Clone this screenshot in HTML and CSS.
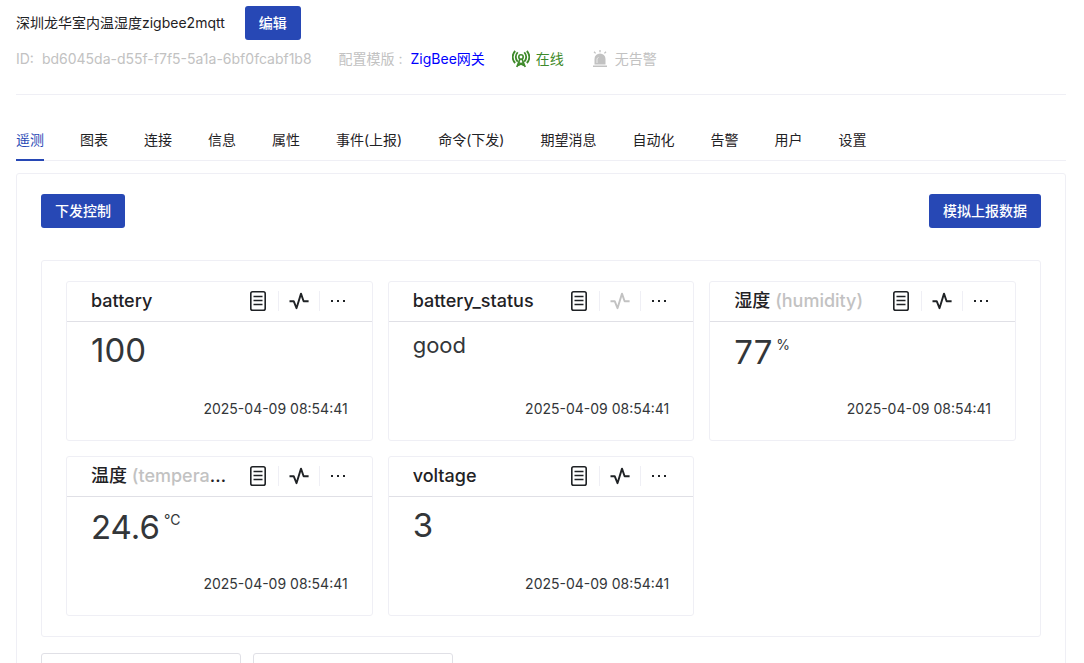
FILE: index.html
```html
<!DOCTYPE html>
<html lang="zh-CN">
<head>
    <meta charset="UTF-8">
    <meta name="viewport" content="width=device-width, initial-scale=1.0">
    <title>深圳龙华室内温湿度zigbee2mqtt</title>
    <link rel="stylesheet" href="styles.css">
</head>
<body>

<!-- Shared icons -->
<svg class="sprite" aria-hidden="true">
    <symbol id="icon-doc" viewBox="0 0 20 20">
        <rect x="2.8" y="0.8" width="14.4" height="18.4" rx="1.8" fill="none" stroke="currentColor" stroke-width="1.6"/>
        <path d="M5.5 5.5h9M5.5 9.5h9M5.5 13.5h9" fill="none" stroke="currentColor" stroke-width="1.3"/>
    </symbol>
    <symbol id="icon-pulse" viewBox="0 0 20 20">
        <path d="M0.5 10.2h4.2l2.8 7L12 2.6l2.6 7.6h5" fill="none" stroke="currentColor" stroke-width="1.9" stroke-linejoin="round"/>
    </symbol>
    <symbol id="icon-more" viewBox="0 0 18 20">
        <path d="M1 9h2v2H1zM7 9h2v2H7zM13 9h2v2h-2z" fill="currentColor"/>
    </symbol>
</svg>

<div class="page">

    <header class="device-header">
        <div class="device-title">
            <h1>深圳龙华室内温湿度zigbee2mqtt</h1>
            <button type="button" class="btn">编辑</button>
        </div>
        <div class="device-info">
            <span class="device-id"><span>ID:</span><span>bd6045da-d55f-f7f5-5a1a-6bf0fcabf1b8</span></span>
            <span class="device-template"><span>配置模版 :</span><a href="#">ZigBee网关</a></span>
            <span class="status online">
                <svg viewBox="0 0 18 18" width="18" height="18" fill="none" stroke="currentColor" aria-hidden="true">
                    <path d="M3.2 1C-.2 4.500-.2 9.500 3.200 13M14.800 1c3.400 3.500 3.400 8.500 0 12" stroke-width="1.800"/>
                    <path d="M5.700 2.300c-2.300 2.800-2.300 6.600 0 9.400M12.300 2.300c2.300 2.800 2.300 6.600 0 9.400" stroke-width="1.800"/>
                    <circle cx="9" cy="7" r="2.200" stroke-width="1.600"/>
                    <path d="M8 9L4.800 17M10 9l3.200 8M6.500 12.500l5.500 3M11.500 12.500l-5.500 3" stroke-width="1.700"/>
                </svg>
                在线
            </span>
            <span class="status">
                <svg viewBox="0 0 18 18" width="18" height="18" fill="currentColor" aria-hidden="true">
                    <path d="M3.500 14.500V9a5.500 5.500 0 0 1 11 0v5.500zM2 15.500h14V17H2z"/>
                    <path d="M9 0v2.300M3 1.800l1.600 1.600M15 1.800l-1.600 1.600" fill="none" stroke="currentColor" stroke-width="1.300"/>
                    <path d="M6 13V9.500c0-1 .5-1.700 1.500-2" fill="none" stroke="#fff" stroke-width="0.700"/>
                </svg>
                无告警
            </span>
        </div>
    </header>

    <nav class="tabs">
        <a href="#" class="active">遥测</a>
        <a href="#">图表</a>
        <a href="#">连接</a>
        <a href="#">信息</a>
        <a href="#">属性</a>
        <a href="#">事件(上报)</a>
        <a href="#">命令(下发)</a>
        <a href="#">期望消息</a>
        <a href="#">自动化</a>
        <a href="#">告警</a>
        <a href="#">用户</a>
        <a href="#">设置</a>
    </nav>

    <main class="panel">
        <div class="toolbar">
            <button type="button" class="btn">下发控制</button>
            <button type="button" class="btn">模拟上报数据</button>
        </div>

        <!-- Telemetry cards -->
        <div class="cards">
            <section class="card">
                <div class="card-head">
                    <h2>battery</h2>
                    <div class="actions">
                        <button type="button" aria-label="历史数据"><svg><use href="#icon-doc"/></svg></button>
                        <button type="button" aria-label="曲线"><svg><use href="#icon-pulse"/></svg></button>
                        <button type="button" class="more" aria-label="更多"><svg><use href="#icon-more"/></svg></button>
                    </div>
                </div>
                <div class="card-body">
                    <div class="value">100</div>
                    <time>2025-04-09 08:54:41</time>
                </div>
            </section>

            <section class="card">
                <div class="card-head">
                    <h2>battery_status</h2>
                    <div class="actions">
                        <button type="button" aria-label="历史数据"><svg><use href="#icon-doc"/></svg></button>
                        <button type="button" aria-label="曲线" disabled><svg><use href="#icon-pulse"/></svg></button>
                        <button type="button" class="more" aria-label="更多"><svg><use href="#icon-more"/></svg></button>
                    </div>
                </div>
                <div class="card-body">
                    <div class="value text">good</div>
                    <time>2025-04-09 08:54:41</time>
                </div>
            </section>

            <section class="card">
                <div class="card-head">
                    <h2>湿度 <span>(humidity)</span></h2>
                    <div class="actions">
                        <button type="button" aria-label="历史数据"><svg><use href="#icon-doc"/></svg></button>
                        <button type="button" aria-label="曲线"><svg><use href="#icon-pulse"/></svg></button>
                        <button type="button" class="more" aria-label="更多"><svg><use href="#icon-more"/></svg></button>
                    </div>
                </div>
                <div class="card-body">
                    <div class="value with-unit">77<sup>%</sup></div>
                    <time>2025-04-09 08:54:41</time>
                </div>
            </section>

            <section class="card">
                <div class="card-head">
                    <h2>温度 <span>(temperature)</span></h2>
                    <div class="actions">
                        <button type="button" aria-label="历史数据"><svg><use href="#icon-doc"/></svg></button>
                        <button type="button" aria-label="曲线"><svg><use href="#icon-pulse"/></svg></button>
                        <button type="button" class="more" aria-label="更多"><svg><use href="#icon-more"/></svg></button>
                    </div>
                </div>
                <div class="card-body">
                    <div class="value with-unit">24.6<sup>℃</sup></div>
                    <time>2025-04-09 08:54:41</time>
                </div>
            </section>

            <section class="card">
                <div class="card-head">
                    <h2>voltage</h2>
                    <div class="actions">
                        <button type="button" aria-label="历史数据"><svg><use href="#icon-doc"/></svg></button>
                        <button type="button" aria-label="曲线"><svg><use href="#icon-pulse"/></svg></button>
                        <button type="button" class="more" aria-label="更多"><svg><use href="#icon-more"/></svg></button>
                    </div>
                </div>
                <div class="card-body">
                    <div class="value">3</div>
                    <time>2025-04-09 08:54:41</time>
                </div>
            </section>
        </div>

        <div class="filters">
            <input type="text" aria-label="类型">
            <input type="text" aria-label="状态">
        </div>
    </main>

</div>

</body>
</html>
```
FILE: styles.css
```css
* {
    box-sizing: border-box;
}
body {
    margin: 0;
    background-color: #fff;
    color: #1f2225;
    font-family: Inter, "Noto Sans CJK SC", sans-serif;
    font-size: 14px;
    line-height: 22px;
}
h1, h2 {
    margin: 0;
    font-weight: 400;
}
h1 {
    font-size: 14px;
}
a {
    color: inherit;
    text-decoration: none;
}
button {
    font: inherit;
    cursor: pointer;
}
.sprite {
    display: none;
}
.page {
    height: 100vh;
    overflow: hidden;
    padding: 6px 18px 0 16px;
}
.btn {
    height: 34px;
    padding: 0 14px;
    border: none;
    border-radius: 3px;
    background-color: #2748b5;
    color: #fff;
    font-weight: 500;
}

/* Device header */
.device-header {
    padding-bottom: 24px;
    border-bottom: 1px solid #efeff5;
}
.device-title {
    display: flex;
    align-items: center;
    gap: 20px;
    margin-bottom: 8px;
}
.device-info {
    display: flex;
    align-items: center;
    gap: 27px;
    color: #c2c2c2;
}
.device-id, .device-template {
    display: flex;
    gap: 8px;
}
.device-template a {
    color: #0000ff;
}
.status {
    display: flex;
    align-items: center;
    gap: 6px;
}
.online {
    color: #3f8a2b;
}

/* Tabs */
.tabs {
    display: flex;
    gap: 36px;
    margin: 24px 0 12px;
    border-bottom: 1px solid #efeff5;
}
.tabs a {
    padding: 10px 0 8px;
    margin-bottom: -1px;
    border-bottom: 2px solid transparent;
    white-space: nowrap;
}
.tabs .active {
    color: #2748b5;
    border-bottom-color: #2748b5;
}

/* Panel */
.panel {
    padding: 20px 24px;
    border: 1px solid #efeff5;
    border-radius: 3px;
}
.toolbar {
    display: flex;
    justify-content: space-between;
    margin-bottom: 32px;
}
.cards {
    display: grid;
    grid-template-columns: repeat(3, minmax(0, 1fr));
    gap: 15px;
    padding: 20px 24px;
    border: 1px solid #efeff5;
    border-radius: 3px;
}
.card {
    border: 1px solid #efeff5;
    border-radius: 3px;
}
.card-head {
    display: flex;
    align-items: center;
    gap: 20px;
    height: 40px;
    padding: 0 24px 1px;
    border-bottom: 1px solid #e0e0e6;
}
.card-head h2 {
    flex: 1;
    overflow: hidden;
    white-space: nowrap;
    text-overflow: ellipsis;
    font-size: 18px;
    font-weight: 500;
}
.card-head h2 span {
    color: #c2c2c2;
}
.actions {
    display: flex;
    align-items: center;
}
.actions button {
    display: flex;
    padding: 0;
    border: none;
    background: none;
    color: #1f2225;
}
.actions button:disabled {
    color: #c2c2c2;
}
.actions button + button {
    margin-left: 10px;
    padding-left: 10px;
    border-left: 1px solid #efeff5;
}
.actions svg {
    width: 20px;
    height: 20px;
}
.actions .more svg {
    width: 18px;
}
.card-body {
    display: flex;
    flex-direction: column;
    justify-content: space-between;
    height: 118px;
    padding: 8px 24px 20px;
}
.value {
    font-size: 33px;
    line-height: 40px;
    color: #333639;
}
.value.text {
    font-size: 22px;
    line-height: 30px;
}
.value.with-unit {
    line-height: 44px;
}
.value sup {
    margin-left: 4px;
    font-size: 14px;
    line-height: 14px;
    vertical-align: 14px;
}
time {
    text-align: right;
    color: #333639;
}

/* Filters */
.filters {
    display: flex;
    gap: 12px;
    margin-top: 16px;
}
.filters input {
    width: 200px;
    height: 34px;
    padding: 0 12px;
    border: 1px solid #e0e0e6;
    border-radius: 3px;
}
```
